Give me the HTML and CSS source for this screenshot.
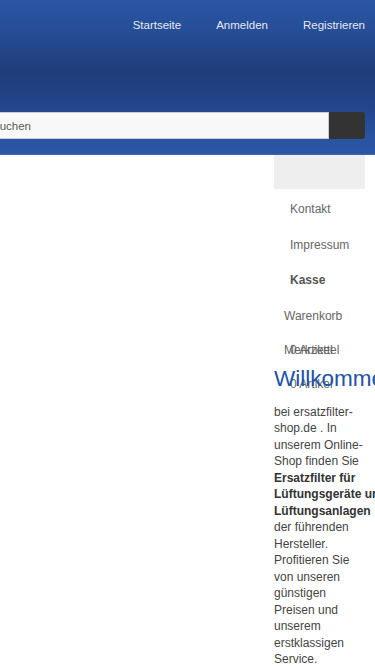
FILE: index.html
```html
<!DOCTYPE html>
<html lang="de">
<head>
    <meta charset="UTF-8">
    <meta name="viewport" content="width=device-width, initial-scale=1.0">
    <title>ersatzfilter-shop.de</title>
    <link rel="stylesheet" href="styles.css">
</head>
<body>
    <header class="site-header">
        <nav class="top-nav">
            <a href="#">Startseite</a>
            <a href="#">Anmelden</a>
            <a href="#">Registrieren</a>
        </nav>
        <form class="search-form">
            <input type="text" class="search-input" placeholder="Suchen">
            <button type="submit" class="search-button"></button>
        </form>
    </header>

    <div class="layout">
        <aside class="sidebar">
            <div class="sidebar-box"></div>
            <ul class="menu">
                <li class="menu-item"><a href="#">Kontakt</a></li>
                <li class="menu-item"><a href="#">Impressum</a></li>
                <li class="menu-item menu-item-bold"><a href="#">Kasse</a></li>
            </ul>
            <div class="cart-block">
                <div class="cart-title">Warenkorb</div>
                <div class="cart-count">0 Artikel</div>
            </div>
            <div class="cart-block">
                <div class="cart-title">Merkzettel</div>
                <div class="cart-count">0 Artikel</div>
            </div>

            <h1 class="welcome-title">Willkommen</h1>
            <p class="welcome-text">
                bei ersatzfilter-shop.de . In unserem Online-Shop finden Sie
                <strong>Ersatzfilter für <span class="nowrap">Lüftungsgeräte und</span> Lüftungsanlagen</strong>
                der führenden Hersteller. Profitieren Sie von unseren günstigen Preisen und unserem erstklassigen Service.
            </p>
        </aside>
    </div>
</body>
</html>
```

FILE: styles.css
```css
html {
    overflow-x: hidden;
}

body {
    font-family: "Liberation Sans", Arial, sans-serif;
    margin: 0;
    background-color: #fff;
    color: #444;
    overflow-x: hidden;
}

.site-header {
    padding: 19px 10px 15px 0;
    background: linear-gradient(to bottom, #2a57a6 0%, #25498f 28%, #1f3d7a 46%, #22448a 68%, #2853a0 88%, #2956a6 100%);
    border-bottom: 1px solid #3a68b4;
}

.top-nav {
    display: flex;
    justify-content: flex-end;
    gap: 35px;
    font-size: 11.5px;
    line-height: 13px;
}

.top-nav a {
    color: #e4e9f2;
    text-decoration: none;
}

.search-form {
    display: flex;
    margin: 80px 0 0 -20px;
    height: 27px;
}

.search-input {
    flex: 1;
    height: 27px;
    box-sizing: border-box;
    padding: 0 0 0 11px;
    border: 1px solid #c8ccd4;
    border-radius: 0;
    background-color: #f8f8f8;
    font-family: "Liberation Sans", Arial, sans-serif;
    font-size: 11.5px;
    color: #555;
}

.search-input::placeholder {
    color: #5a5a5a;
}

.search-button {
    width: 36px;
    height: 27px;
    border: none;
    border-radius: 0 3px 3px 0;
    background-color: #333;
}

.layout {
    display: flex;
    justify-content: flex-end;
    padding-right: 10px;
}

.sidebar {
    width: 91px;
    font-size: 12px;
}

.sidebar-box {
    height: 34px;
    background-color: #eee;
}

.menu {
    list-style-type: none;
    margin: 2px 0 0;
    padding: 0;
}

.menu-item {
    padding: 11px 0 10.5px 16px;
    line-height: 14px;
}

.menu-item a {
    color: #666;
    text-decoration: none;
}

.menu-item-bold a {
    font-weight: bold;
    color: #555;
}

.cart-block {
    height: 34px;
    padding-left: 10px;
    color: #666;
    line-height: 14px;
    white-space: nowrap;
}

.cart-title {
    padding-top: 11.5px;
}

.cart-count {
    margin-top: 20px;
    padding-left: 6px;
}

.welcome-title {
    margin: 0;
    font-size: 22.5px;
    line-height: 26px;
    font-weight: normal;
    color: #2253a8;
    white-space: nowrap;
}

.welcome-text {
    margin: 12px 0 0;
    line-height: 16.5px;
    color: #444;
}

.welcome-text strong {
    color: #333;
}

.nowrap {
    white-space: nowrap;
}
```
